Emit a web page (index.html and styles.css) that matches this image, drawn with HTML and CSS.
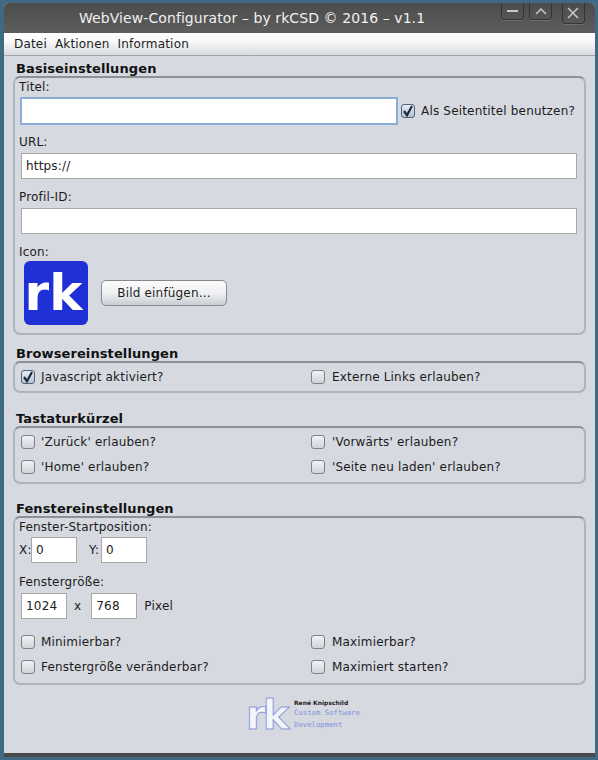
FILE: index.html
```html
<!DOCTYPE html>
<html lang="de">
<head>
<meta charset="utf-8">
<title>WebView-Configurator</title>
<link rel="stylesheet" href="styles.css">
</head>
<body>
<div class="window">
  <header class="titlebar">
    <span class="title">WebView-Configurator – by rkCSD © 2016 – v1.1</span>
    <div class="winbtns">
      <span class="winbtn"><svg width="21" height="17" viewBox="0 0 21 17"><path d="M5 8h11" stroke="#c9c9c9" stroke-width="2"/></svg></span>
      <span class="winbtn"><svg width="21" height="17" viewBox="0 0 21 17"><path d="M6 11l5-5 5 5" stroke="#c9c9c9" stroke-width="1.5" fill="none"/></svg></span>
      <span class="winbtn winclose"><svg width="21" height="21" viewBox="0 0 21 21"><path d="M5 5l10 10M15 5L5 15" stroke="#c9c9c9" stroke-width="1.5" fill="none"/></svg></span>
    </div>
  </header>
  <nav class="menubar"><span>Datei</span><span>Aktionen</span><span>Information</span></nav>
  <main class="content">
    <h2 class="legend">Basiseinstellungen</h2>
    <section class="group group-base">
      <div class="label">Titel:</div>
      <div class="row-title">
        <div class="input input-focus"></div>
        <span class="check checked"><svg width="14" height="14" viewBox="0 0 14 14"><path d="M3 7l3 4.2L11 2" stroke="#1c2a3a" stroke-width="2.2" fill="none"/></svg></span>
        <span class="check-text">Als Seitentitel benutzen?</span>
      </div>
      <div class="label label-url">URL:</div>
      <div class="input input-full">https://</div>
      <div class="label label-gap">Profil-ID:</div>
      <div class="input input-full"></div>
      <div class="label label-gap">Icon:</div>
      <div class="row-icon">
        <div class="rk-icon"><span>rk</span></div>
        <button class="button">Bild einfügen...</button>
      </div>
    </section>

    <h2 class="legend legend-browser">Browsereinstellungen</h2>
    <section class="group group-one">
      <div class="checks">
        <label class="opt"><span class="check checked"><svg width="14" height="14" viewBox="0 0 14 14"><path d="M3 7l3 4.2L11 2" stroke="#1c2a3a" stroke-width="2.2" fill="none"/></svg></span>Javascript aktiviert?</label>
        <label class="opt"><span class="check"></span>Externe Links erlauben?</label>
      </div>
    </section>

    <h2 class="legend legend-keys">Tastaturkürzel</h2>
    <section class="group group-two">
      <div class="checks">
        <label class="opt"><span class="check"></span>'Zurück' erlauben?</label>
        <label class="opt"><span class="check"></span>'Vorwärts' erlauben?</label>
        <label class="opt"><span class="check"></span>'Home' erlauben?</label>
        <label class="opt"><span class="check"></span>'Seite neu laden' erlauben?</label>
      </div>
    </section>

    <h2 class="legend legend-window">Fenstereinstellungen</h2>
    <section class="group group-window">
      <div class="label">Fenster-Startposition:</div>
      <div class="row-pos">
        <span class="mini">X:</span><div class="input input-small">0</div>
        <span class="mini mini-y">Y:</span><div class="input input-small">0</div>
      </div>
      <div class="label label-size">Fenstergröße:</div>
      <div class="row-size">
        <div class="input input-small">1024</div>
        <span class="mini mini-x">x</span>
        <div class="input input-small">768</div>
        <span class="mini mini-px">Pixel</span>
      </div>
      <div class="checks checks-window">
        <label class="opt"><span class="check"></span>Minimierbar?</label>
        <label class="opt"><span class="check"></span>Maximierbar?</label>
        <label class="opt"><span class="check"></span>Fenstergröße veränderbar?</label>
        <label class="opt"><span class="check"></span>Maximiert starten?</label>
      </div>
    </section>

    <footer class="brand">
      <svg class="brand-rk" width="44" height="32" viewBox="0 0 44 32"><text x="0" y="30" class="brand-letters">rk</text></svg>
      <div class="brand-text">
        <div class="brand-name">René Knipschild</div>
        <div class="brand-line">Custom Software</div>
        <div class="brand-line">Development</div>
      </div>
    </footer>
  </main>
</div>
</body>
</html>
```
FILE: styles.css
```css
* { box-sizing: border-box; }
html, body { margin: 0; height: 100%; }
body {
  width: 598px;
  height: 760px;
  overflow: hidden;
  background: #3e6a84;
  padding: 3px 3px 3px 4px;
  font-family: "DejaVu Sans", sans-serif;
  font-size: 12px;
  letter-spacing: 0.18px;
  color: #1c1c1c;
}
.window {
  height: 754px;
  display: flex;
  flex-direction: column;
  background: #d6d9e0;
  border-radius: 5px 5px 0 0;
  border-bottom: 4px solid #4a4a4a;
  overflow: hidden;
}
.titlebar {
  height: 30px;
  flex: none;
  background: linear-gradient(#4c4c4c, #5d5d5d);
  display: flex;
  align-items: center;
  position: relative;
  color: #f0f0f0;
  font-size: 14px;
  font-weight: 500;
}
.title { margin-left: 75px; letter-spacing: 0.08px; }
.winbtns {
  position: absolute;
  top: 0;
  right: 0;
  display: flex;
  align-items: flex-start;
}
.winbtn {
  width: 23px;
  height: 17px;
  border: 1px solid #333;
  border-top: 0;
  border-radius: 0 0 4px 4px;
  margin-right: 5px;
  display: flex;
  justify-content: center;
  box-shadow: 0 1px 0 #6f6f6f;
}
.winbtn svg { flex: none; }
.winclose { height: 21px; margin-left: 5px; margin-right: 10px; }
.menubar {
  height: 23px;
  flex: none;
  background: linear-gradient(#ffffff, #fafafa 35%, #d8dadf);
  border-bottom: 1px solid #a0a4ac;
  display: flex;
  align-items: center;
  gap: 8px;
  padding: 0 0 0 10px;
  color: #222;
}
.content { flex: 1; padding: 5px 9px 0; min-height: 0; }
.legend {
  margin: 0 0 0 3px;
  font-size: 13px;
  line-height: 15px;
  height: 15px;
  font-weight: 700;
  letter-spacing: 0.1px;
  color: #111;
}
.legend-browser { margin-top: 11px; }
.legend-keys { margin-top: 18px; }
.legend-window { margin-top: 17px; }
.group {
  border: 2px solid #b0b3ba;
  border-top-color: #8d9097;
  border-radius: 7px;
  padding: 0 5px;
}
.group-base { height: 259px; }
.group-one { height: 32px; padding: 1px 6px 0; }
.group-two { height: 58px; padding: 1px 6px 0; }
.group-window { height: 169px; }
.label { height: 15px; line-height: 15px; margin-left: -1px; margin-top: 2px; }
.label-url { margin-top: 10px; }
.label-gap { margin-top: 11px; }
.row-title { display: flex; align-items: center; margin-top: 2px; }
.input {
  background: #fff;
  border: 1px solid #a8a8a8;
  height: 26px;
  line-height: 24px;
  padding-left: 4px;
  color: #222;
}
.input-focus {
  width: 378px;
  height: 28px;
  border: 2px solid #8aaed4;
  margin-right: 3px;
}
.input-full { width: 556px; margin-left: 1px; margin-top: 3px; }
.row-title .check { margin-right: 6px; }
.check {
  display: inline-flex;
  flex: none;
  width: 14px;
  height: 14px;
  border: 1px solid #7d8189;
  border-radius: 3px;
  background: linear-gradient(#f2f3f5, #c9ccd3);
}
.check svg { margin: -1px; flex: none; }
.check.checked { background: linear-gradient(#e6edf5, #b4c3d6); border-color: #556070; }
.row-icon { display: flex; align-items: center; margin-left: 4px; margin-top: 1px; }
.rk-icon {
  width: 64px;
  height: 64px;
  background: #1f31d6;
  border-radius: 6px;
  display: flex;
  align-items: center;
  justify-content: center;
  flex: none;
}
.rk-icon span {
  color: #fff;
  font-family: "DejaVu Sans", sans-serif;
  font-weight: 700;
  font-size: 50px;
  line-height: 50px;
  letter-spacing: 0;
  margin: 0 0 0 -5px;
}
.button {
  margin-left: 13px;
  width: 126px;
  height: 26px;
  border: 1px solid #85888f;
  border-radius: 5px;
  background: linear-gradient(#fbfbfc, #f0f1f3 50%, #c9ccd4);
  font: inherit;
  letter-spacing: inherit;
  color: #1c1c1c;
  padding: 0;
}
.checks {
  display: grid;
  grid-template-columns: 290px 1fr;
  grid-auto-rows: 25px;
  align-items: center;
}
.opt { display: flex; align-items: center; gap: 6px; }
.opt:nth-child(even) { gap: 7px; }
.checks .check { background: linear-gradient(#f2f3f5, #d0d3d9); }
.checks .check.checked { background: linear-gradient(#e6edf5, #b4c3d6); }
.row-pos { display: flex; align-items: center; margin-top: 2px; }
.row-pos .mini { width: 12px; margin: 0 0 0 -1px; }
.row-pos .mini-y { margin-left: 12px; }
.input-small { width: 46px; height: 26px; line-height: 25px; flex: none; }
.label-size { margin-top: 12px; }
.row-size { display: flex; align-items: center; margin-top: 3px; margin-left: 1px; }
.mini-x { margin: 0 10px 0 7px; }
.mini-px { margin-left: 7px; }
.checks-window { margin-top: 10px; margin-left: 1px; }
.brand {
  display: flex;
  align-items: flex-start;
  margin: 12px 0 0 233px;
  height: 36px;
}
.brand-rk { flex: none; margin-top: 2px; overflow: visible; }
.brand-letters {
  font-family: "DejaVu Sans", sans-serif;
  font-size: 40px;
  font-weight: 700;
  letter-spacing: -3px;
  fill: #f4f5f9;
  stroke: #8a9cdc;
  stroke-width: 1;
}
.brand-text { margin: 2px 0 0 4px; letter-spacing: 0; }
.brand-name { font-size: 6px; font-weight: 700; line-height: 8px; color: #222; }
.brand-line {
  font-family: "DejaVu Sans Mono", monospace;
  font-size: 7.3px;
  line-height: 12px;
  color: #7d92dc;
}
```
